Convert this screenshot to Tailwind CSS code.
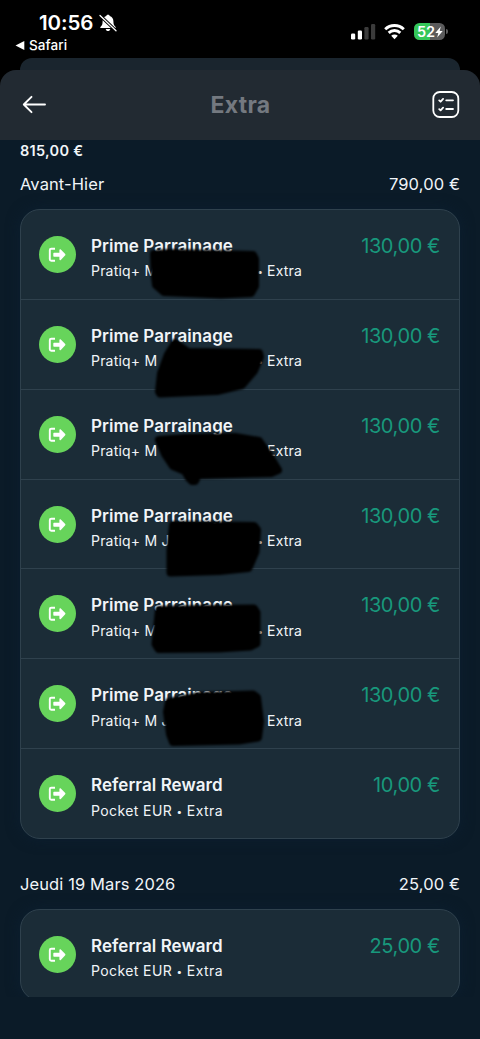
<!DOCTYPE html>
<html lang="fr">
<head>
<meta charset="utf-8">
<meta name="viewport" content="width=device-width, initial-scale=1">
<title>Extra</title>
<script src="https://cdn.jsdelivr.net/npm/@tailwindcss/browser@4"></script>
</head>
<body class="bg-black">
<svg class="hidden">
  <symbol id="out" viewBox="0 0 37 37">
    <circle cx="18.5" cy="18.5" r="18.5" fill="#67d45b"/>
    <path d="M16 12.700h-3.700c-1 0-1.500.5-1.500 1.500v9.100c0 1 .5 1.500 1.500 1.500H16" fill="none" stroke="#fff" stroke-width="1.900"/>
    <path d="M15 16.700h5.400v-2.600c0-.9.8-1.200 1.400-.6l4.200 4.300c.6.6.6 1.200 0 1.800l-4.200 4.300c-.6.6-1.400.3-1.400-.6v-2.600H15c-.4 0-.7-.3-.7-.7v-2.600c0-.4.3-.7.7-.7z" fill="#fff"/>
  </symbol>
</svg>
<div class="relative flex h-[1039px] w-[480px] flex-col overflow-hidden bg-black font-['Inter',sans-serif] text-[#f1f5f8]">
  <header class="flex h-[58px] shrink-0 justify-between">
    <div class="pt-[11px] pl-[15px]">
      <div class="flex items-center gap-[6px] pl-6 text-white">
        <span class="text-[20.500px] leading-[23px] font-semibold tracking-[-0.1px]">10:56</span>
        <svg class="size-[18px]" viewBox="0 0 18 18"><path d="M9 .7c.9 0 1.600.5 1.700 1.300 2.400.7 3.700 2.700 3.700 5.300 0 3.200.6 4.200 2 5.500.6.6.4 1.300-.5 1.300H2.100c-.9 0-1.100-.7-.5-1.300 1.400-1.300 2-2.300 2-5.500 0-2.600 1.300-4.600 3.700-5.300C7.400 1.200 8.100.7 9 .7zM6.700 15h4.600c-.2 1.300-1.100 2.100-2.300 2.100S6.900 16.300 6.700 15z" fill="#fff"/><path d="M.9 1.300l16 15.300" stroke="#000" stroke-width="3.200"/><path d="M1 1.500l16 15.200" stroke="#fff" stroke-width="1.300" stroke-linecap="round"/></svg>
      </div>
      <div class="mt-[3px] flex items-center gap-[4px] text-[13.500px] leading-[17px] font-medium tracking-[.1px] text-white">
        <svg class="h-[9px] w-[10px]" viewBox="0 0 10 9"><path d="M.5 4.500L9.300 0v9z" fill="#fff"/></svg>
        <span>Safari</span>
      </div>
    </div>
    <div class="flex h-[17px] pt-[23px] pr-[32px]">
      <svg class="h-[17px] w-[25px]" viewBox="0 0 25 17"><rect x="0" y="10.500" width="4.200" height="6" rx="1.200" fill="#fff"/><rect x="6.800" y="7.500" width="4.200" height="9" rx="1.200" fill="#fff"/><rect x="13.400" y="4" width="4.200" height="12.500" rx="1.200" fill="#3b3b3b"/><rect x="20" y="1" width="4.200" height="15.500" rx="1.200" fill="#3b3b3b"/></svg>
      <svg class="ml-[8px] h-[17px] w-[21px]" viewBox="0 0 21 17"><g fill="none" stroke="#fff" stroke-width="2.900"><path d="M1.200 6.300a13.300 13.300 0 0 1 18.600 0"/><path d="M4.700 9.900a8.300 8.300 0 0 1 11.600 0"/></g><path d="M10.500 16.200l-3.300-3.400a4.700 4.700 0 0 1 6.600 0z" fill="#fff"/></svg>
      <div class="relative ml-[9px] flex h-[17px] w-[31px] items-center overflow-hidden rounded-[5.500px] bg-[linear-gradient(90deg,#35c759_0_16px,#5b5b5c_16px)] pl-[3px] text-[14.500px] font-semibold tracking-[-0.2px] text-white">52<svg class="h-[12px] w-[8px]" viewBox="0 0 8 12"><path d="M5.800.6L.3 6.900h3L2.200 11.500l5.500-6.400h-3z" fill="#fff"/></svg></div>
      <div class="mt-[6px] ml-px h-[5px] w-[2px] rounded-r-full bg-[#5b5b5c]"></div>
    </div>
  </header>
  <div class="mx-[20px] h-[12px] shrink-0 rounded-t-[12px] bg-[#1a252e]"></div>
  <nav class="flex h-[70px] shrink-0 items-center justify-between rounded-t-[16px] bg-[#222a32] px-[20px]">
    <svg class="ml-[2px] h-[20px] w-[25px]" viewBox="0 0 25 20"><path d="M23 9.500H2M9.500 1.800L1.800 9.500l7.700 7.700" fill="none" stroke="#fff" stroke-width="1.900" stroke-linecap="round" stroke-linejoin="round"/></svg>
    <h1 class="pl-[2px] text-[23px] leading-7 font-bold tracking-[.3px] text-[#747980]">Extra</h1>
    <svg class="size-[28px]" viewBox="0 0 28 28"><g fill="none" stroke="#fff" stroke-width="1.800" stroke-linecap="round" stroke-linejoin="round"><rect x="1.300" y="1" width="25" height="25" rx="6.500"/><path d="M14.200 9.300h6.800M14.200 18h6.800M7.200 9.400l1.400 1.300 2.500-2.800M7.200 18.100l1.400 1.300 2.500-2.800"/></g></svg>
  </nav>
  <main class="flex h-[857px] shrink-0 flex-col overflow-hidden bg-[#0b1b28] px-[20px]">
    <div class="pt-px text-[14.500px] leading-[20px] font-semibold tracking-[.3px]">815,00 €</div>
    <div class="flex h-[48px] shrink-0 items-center justify-between pb-[2px] text-[16.500px] tracking-[.1px]"><span>Avant-Hier</span><span>790,00 €</span></div>
    <section class="flex h-[630px] shrink-0 flex-col divide-y divide-[#2f414d] rounded-[20px] border border-[#2f414d] bg-[#1b2c37] shadow-[0_0_14px_#0c1f30]">
      <div class="flex flex-1 pl-[18px] pr-[19px]"><svg class="mt-[26px] size-[37px]"><use href="#out"/></svg><div class="ml-[15px] flex-1 pt-[24px]"><div class="text-[17px] leading-[24px] font-semibold tracking-[.05px]">Prime Parrainage</div><div class="mt-[3px] flex justify-between text-[14px] leading-[20px] tracking-[.2px]"><span>Pratiq+ M</span><span class="mr-[59px]"><span class="align-[1px] text-[10px] leading-none">•</span> Extra</span></div></div><div class="pt-[23px] text-[20px] leading-[26px] tracking-[-0.4px] text-[#18987c]">130,00 €</div></div>
      <div class="flex flex-1 pl-[18px] pr-[19px]"><svg class="mt-[26px] size-[37px]"><use href="#out"/></svg><div class="ml-[15px] flex-1 pt-[24px]"><div class="text-[17px] leading-[24px] font-semibold tracking-[.05px]">Prime Parrainage</div><div class="mt-[3px] flex justify-between text-[14px] leading-[20px] tracking-[.2px]"><span>Pratiq+ M</span><span class="mr-[59px]"><span class="align-[1px] text-[10px] leading-none">•</span> Extra</span></div></div><div class="pt-[23px] text-[20px] leading-[26px] tracking-[-0.4px] text-[#18987c]">130,00 €</div></div>
      <div class="flex flex-1 pl-[18px] pr-[19px]"><svg class="mt-[26px] size-[37px]"><use href="#out"/></svg><div class="ml-[15px] flex-1 pt-[24px]"><div class="text-[17px] leading-[24px] font-semibold tracking-[.05px]">Prime Parrainage</div><div class="mt-[3px] flex justify-between text-[14px] leading-[20px] tracking-[.2px]"><span>Pratiq+ M</span><span class="mr-[59px]"><span class="align-[1px] text-[10px] leading-none">•</span> Extra</span></div></div><div class="pt-[23px] text-[20px] leading-[26px] tracking-[-0.4px] text-[#18987c]">130,00 €</div></div>
      <div class="flex flex-1 pl-[18px] pr-[19px]"><svg class="mt-[26px] size-[37px]"><use href="#out"/></svg><div class="ml-[15px] flex-1 pt-[24px]"><div class="text-[17px] leading-[24px] font-semibold tracking-[.05px]">Prime Parrainage</div><div class="mt-[3px] flex justify-between text-[14px] leading-[20px] tracking-[.2px]"><span>Pratiq+ M J</span><span class="mr-[59px]"><span class="align-[1px] text-[10px] leading-none">•</span> Extra</span></div></div><div class="pt-[23px] text-[20px] leading-[26px] tracking-[-0.4px] text-[#18987c]">130,00 €</div></div>
      <div class="flex flex-1 pl-[18px] pr-[19px]"><svg class="mt-[26px] size-[37px]"><use href="#out"/></svg><div class="ml-[15px] flex-1 pt-[24px]"><div class="text-[17px] leading-[24px] font-semibold tracking-[.05px]">Prime Parrainage</div><div class="mt-[4px] flex justify-between text-[14px] leading-[20px] tracking-[.2px]"><span>Pratiq+ M</span><span class="mr-[59px]"><span class="align-[1px] text-[10px] leading-none">•</span> Extra</span></div></div><div class="pt-[23px] text-[20px] leading-[26px] tracking-[-0.4px] text-[#18987c]">130,00 €</div></div>
      <div class="flex flex-1 pl-[18px] pr-[19px]"><svg class="mt-[26px] size-[37px]"><use href="#out"/></svg><div class="ml-[15px] flex-1 pt-[24px]"><div class="text-[17px] leading-[24px] font-semibold tracking-[.05px]">Prime Parrainage</div><div class="mt-[4px] flex justify-between text-[14px] leading-[20px] tracking-[.2px]"><span>Pratiq+ M J</span><span class="mr-[59px]"><span class="align-[1px] text-[10px] leading-none">•</span> Extra</span></div></div><div class="pt-[23px] text-[20px] leading-[26px] tracking-[-0.4px] text-[#18987c]">130,00 €</div></div>
      <div class="flex flex-1 pl-[18px] pr-[19px]"><svg class="mt-[26px] size-[37px]"><use href="#out"/></svg><div class="ml-[15px] flex-1 pt-[24px]"><div class="text-[17px] leading-[24px] font-semibold tracking-[.05px]">Referral Reward</div><div class="mt-[4px] text-[14px] leading-[20px] tracking-[.4px]">Pocket EUR <span class="align-[1px] text-[10px] leading-none">•</span> Extra</div></div><div class="pt-[23px] text-[20px] leading-[26px] tracking-[-0.4px] text-[#18987c]">10,00 €</div></div>
    </section>
    <div class="mt-[20px] flex h-[50px] shrink-0 items-center justify-between text-[16.500px] tracking-[.1px]"><span>Jeudi 19 Mars 2026</span><span>25,00 €</span></div>
    <section class="flex h-[92px] shrink-0 rounded-[20px] border border-[#2f414d] bg-[#1b2c37] pl-[18px] pr-[19px] shadow-[0_0_14px_#0c1f30]"><svg class="mt-[26px] size-[37px]"><use href="#out"/></svg><div class="ml-[15px] flex-1 pt-[24px]"><div class="text-[17px] leading-[24px] font-semibold tracking-[.05px]">Referral Reward</div><div class="mt-[3px] text-[14px] leading-[20px] tracking-[.4px]">Pocket EUR <span class="align-[1px] text-[10px] leading-none">•</span> Extra</div></div><div class="pt-[23px] text-[20px] leading-[26px] tracking-[-0.4px] text-[#18987c]">25,00 €</div></section>
  </main>
  <footer class="flex-1 bg-[#0b1b28]"></footer>
  <!-- hand-drawn marks hiding the names -->
  <svg class="absolute inset-0 h-[1039px] w-[480px] blur-[0.8px]" viewBox="0 0 480 1039" fill="#000" stroke="#000" stroke-width="8" stroke-linejoin="round">
    <path d="M154 254l16-1 83 2 2 4v27l-4 7-30 1.500-57-2.500-8-7-1-8z"/>
    <path d="M175 343l13 9 71 1 1 4-6 14-12 14-25 6-57 2.500-1-2 2-18 7-19z"/>
    <path d="M159 440l26-2 50-1 24 4 10 14 9 15-7 3-73 2-3 6-3 0-3-3-4-7-12-5-8-12z"/>
    <path d="M173 525l81 1 3 4-1.500 22-7 16-29 3-49 1.500v-22z"/>
    <path d="M159 610l41-1 54-.5 2.500 4v31l-6 3-32 2-60 .5-3-5z"/>
    <path d="M169 702l31-6 53-1.500 4 3 3 24-2 16-19 3-66 1.500-3-8-3-22z"/>
  </svg>
</div>
</body>
</html>
